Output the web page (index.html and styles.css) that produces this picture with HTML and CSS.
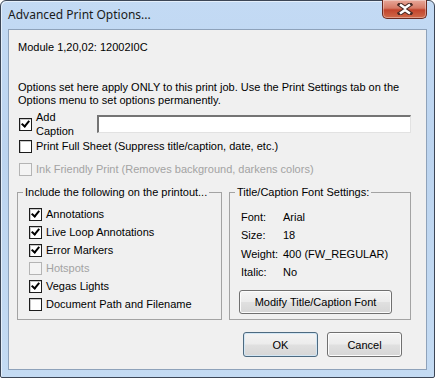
FILE: index.html
```html
<!DOCTYPE html>
<html lang="en">
<head>
  <meta charset="UTF-8">
  <meta name="viewport" content="width=device-width, initial-scale=1.0">
  <title>Advanced Print Options...</title>
  <link rel="stylesheet" href="styles.css">
</head>
<body>

  <div class="window">
    <div class="titlebar">
      <span class="title">Advanced Print Options...</span>
      <span class="close">
        <svg width="16" height="12" viewBox="0 0 16 12">
          <path d="M3 1.5 L8 5 L13 1.5 M3 10.5 L8 7 L13 10.5" fill="none" stroke="#4a2a24" stroke-width="4.5" stroke-linecap="square"/>
          <path d="M3 1.5 L8 5 L13 1.5 M3 10.5 L8 7 L13 10.5" fill="none" stroke="#fff" stroke-width="2.5"/>
        </svg>
      </span>
    </div>

    <div class="client">
      <div class="module">Module 1,20,02: 12002I0C</div>

      <p class="note">Options set here apply ONLY to this print job. Use the Print Settings tab on the Options menu to set options permanently.</p>

      <div class="caption-row">
        <div class="check">
          <span class="box checked"></span>
          <span class="text">Add<br>Caption</span>
        </div>
        <span class="textbox"></span>
      </div>

      <div class="check full-sheet">
        <span class="box"></span>
        <span class="text">Print Full Sheet (Suppress title/caption, date, etc.)</span>
      </div>

      <div class="check ink disabled">
        <span class="box"></span>
        <span class="text">Ink Friendly Print (Removes background, darkens colors)</span>
      </div>

      <div class="groups">
        <fieldset class="group include">
          <legend>Include the following on the printout...</legend>
          <div class="items">
            <div class="check"><span class="box checked"></span><span class="text">Annotations</span></div>
            <div class="check"><span class="box checked"></span><span class="text">Live Loop Annotations</span></div>
            <div class="check"><span class="box checked"></span><span class="text">Error Markers</span></div>
            <div class="check disabled"><span class="box"></span><span class="text">Hotspots</span></div>
            <div class="check"><span class="box checked"></span><span class="text">Vegas Lights</span></div>
            <div class="check"><span class="box"></span><span class="text">Document Path and Filename</span></div>
          </div>
        </fieldset>

        <fieldset class="group fontset">
          <legend>Title/Caption Font Settings:</legend>
          <div class="items">
            <div class="prop"><span class="key">Font:</span><span>Arial</span></div>
            <div class="prop"><span class="key">Size:</span><span>18</span></div>
            <div class="prop"><span class="key">Weight:</span><span>400 (FW_REGULAR)</span></div>
            <div class="prop"><span class="key">Italic:</span><span>No</span></div>
            <button class="btn modify">Modify Title/Caption Font</button>
          </div>
        </fieldset>
      </div>

      <div class="actions">
        <button class="btn ok">OK</button>
        <button class="btn">Cancel</button>
      </div>
    </div>
  </div>

</body>
</html>
```

FILE: styles.css
```css
body {
  margin: 0;
  font-family: "Liberation Sans", Arial, sans-serif;
  font-size: 11px;
  color: #000;
  background: #fff;
}
.window {
  width: 433px;
  height: 376px;
  border: 1px solid #3c4656;
  border-radius: 6px 6px 2px 2px;
  background: linear-gradient(to bottom, #c3daf4 0%, #bcd4ef 40%, #c4dbf3 100%);
  box-shadow: inset 1px 1px 0 #e4effb;
  display: flex;
  flex-direction: column;
}
.titlebar {
  height: 28px;
  display: flex;
  align-items: flex-start;
  padding-left: 7px;
  padding-right: 7px;
}
.title {
  font-family: "Noto Sans", "Open Sans", sans-serif;
  font-size: 12px;
  line-height: 28px;
  color: #1a1a1a;
}
.close {
  margin-left: auto;
  margin-top: -1px;
  width: 45px;
  height: 19px;
  box-sizing: border-box;
  border: 1px solid #6b2a20;
  border-top: none;
  border-radius: 0 0 5px 5px;
  background: linear-gradient(to bottom, #e8a899 0%, #d67a66 45%, #c2442c 55%, #d06a4a 100%);
  box-shadow: inset 0 0 0 1px rgba(255, 255, 255, 0.35);
  display: flex;
  align-items: center;
  justify-content: center;
}
.client {
  margin: 0 7px;
  border: 1px solid #8ea2ba;
  background: #f0f0f0;
  padding: 11px 0 0 9px;
  box-sizing: border-box;
  height: 341px;
  line-height: 13px;
}
.module {
  height: 13px;
}
.note {
  margin: 27px 0 0 0;
  width: 395px;
}
.caption-row {
  margin-top: 3px;
  display: flex;
  align-items: center;
}
.check {
  display: flex;
  align-items: center;
  margin-left: 1px;
}
.box {
  width: 13px;
  height: 13px;
  box-sizing: border-box;
  border: 1px solid #1c1c1c;
  background: #fff;
  box-shadow: inset 1px 1px 0 #c8c8c8;
  margin-right: 4px;
  flex-shrink: 0;
  position: relative;
}
.box.checked::after {
  content: "";
  position: absolute;
  left: 3px;
  top: 0px;
  width: 3px;
  height: 6px;
  border-right: 2px solid #000;
  border-bottom: 2px solid #000;
  transform: rotate(40deg);
}
.caption-row .text {
  display: block;
  width: 61px;
  line-height: 14px;
}
.textbox {
  width: 314px;
  height: 18px;
  box-sizing: border-box;
  background: #fff;
  border-top: 2px solid #747474;
  border-left: 2px solid #747474;
  border-right: 1px solid #e2e2e2;
  border-bottom: 1px solid #e2e2e2;
}
.full-sheet {
  margin-top: 2px;
}
.ink {
  margin-top: 10px;
}
.disabled {
  color: #a3a3a3;
}
.disabled .box {
  border-color: #b4b4b4;
  background: #f4f4f4;
  box-shadow: none;
}
.groups {
  display: flex;
  gap: 7px;
  margin-top: 10px;
  margin-left: -1px;
}
.group {
  margin: 0;
  padding: 0;
  height: 134px;
  box-sizing: border-box;
  border: 1px solid #a3a3a3;
  border-radius: 0;
  min-width: 0;
}
.group legend {
  margin-left: 5px;
  padding: 0 2px;
  line-height: 13px;
}
.include {
  width: 205px;
}
.include .items {
  padding: 6px 0 0 10px;
}
.include .check {
  height: 18.1px;
}
.fontset {
  width: 182px;
}
.fontset .items {
  padding: 9px 0 0 11px;
}
.prop {
  display: flex;
  height: 18.5px;
  align-items: center;
}
.prop .key {
  width: 42px;
}
.btn {
  font-family: "Liberation Sans", Arial, sans-serif;
  font-size: 11px;
  color: #000;
  height: 24px;
  border: 1px solid #707070;
  border-radius: 3px;
  background: linear-gradient(to bottom, #f4f4f4 0%, #ececec 48%, #e0e0e0 52%, #d6d6d6 100%);
  box-shadow: inset 0 0 0 1px #fcfcfc;
  padding: 0;
}
.modify {
  margin: 8px 0 0 -2px;
  width: 153px;
}
.actions {
  display: flex;
  justify-content: flex-end;
  gap: 9px;
  margin-top: 12px;
  padding-right: 24px;
}
.actions .btn {
  width: 75px;
  height: 25px;
}
.ok {
  border-color: #4d6a80;
  box-shadow: inset 0 0 0 1px #d2e6f4;
}
```
